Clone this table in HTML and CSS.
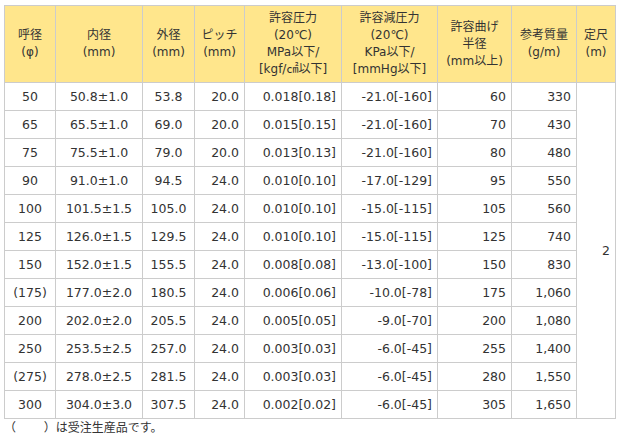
FILE: index.html
```html
<!DOCTYPE html>
<html lang="ja">
<head>
<meta charset="utf-8">
<link rel="stylesheet" href="styles.css">
</head>
<body>
<div class="wrap">
<table class="spec">
  <colgroup>
    <col class="c1"><col class="c2"><col class="c3"><col class="c4"><col class="c5"><col class="c6"><col class="c7"><col class="c8"><col class="c9">
  </colgroup>
  <thead>
    <tr>
      <th>呼径<br>(φ)</th>
      <th>内径<br>(mm)</th>
      <th>外径<br>(mm)</th>
      <th>ピッチ<br>(mm)</th>
      <th>許容圧力<br>(20℃)<br>MPa以下/<br>[kgf/㎠以下]</th>
      <th>許容減圧力<br>(20℃)<br>KPa以下/<br>[mmHg以下]</th>
      <th>許容曲げ<br>半径<br>(mm以上)</th>
      <th>参考質量<br>(g/m)</th>
      <th>定尺<br>(m)</th>
    </tr>
  </thead>
  <tbody>
    <tr><td class="ctr">50</td><td class="ctr">50.8±1.0</td><td class="ctr">53.8</td><td>20.0</td><td>0.018[0.18]</td><td>-21.0[-160]</td><td>60</td><td>330</td><td class="len" rowspan="12">2</td></tr>
    <tr><td class="ctr">65</td><td class="ctr">65.5±1.0</td><td class="ctr">69.0</td><td>20.0</td><td>0.015[0.15]</td><td>-21.0[-160]</td><td>70</td><td>430</td></tr>
    <tr><td class="ctr">75</td><td class="ctr">75.5±1.0</td><td class="ctr">79.0</td><td>20.0</td><td>0.013[0.13]</td><td>-21.0[-160]</td><td>80</td><td>480</td></tr>
    <tr><td class="ctr">90</td><td class="ctr">91.0±1.0</td><td class="ctr">94.5</td><td>24.0</td><td>0.010[0.10]</td><td>-17.0[-129]</td><td>95</td><td>550</td></tr>
    <tr><td class="ctr">100</td><td class="ctr">101.5±1.5</td><td class="ctr">105.0</td><td>24.0</td><td>0.010[0.10]</td><td>-15.0[-115]</td><td>105</td><td>560</td></tr>
    <tr><td class="ctr">125</td><td class="ctr">126.0±1.5</td><td class="ctr">129.5</td><td>24.0</td><td>0.010[0.10]</td><td>-15.0[-115]</td><td>125</td><td>740</td></tr>
    <tr><td class="ctr">150</td><td class="ctr">152.0±1.5</td><td class="ctr">155.5</td><td>24.0</td><td>0.008[0.08]</td><td>-13.0[-100]</td><td>150</td><td>830</td></tr>
    <tr><td class="ctr">(175)</td><td class="ctr">177.0±2.0</td><td class="ctr">180.5</td><td>24.0</td><td>0.006[0.06]</td><td>-10.0[-78]</td><td>175</td><td>1,060</td></tr>
    <tr><td class="ctr">200</td><td class="ctr">202.0±2.0</td><td class="ctr">205.5</td><td>24.0</td><td>0.005[0.05]</td><td>-9.0[-70]</td><td>200</td><td>1,080</td></tr>
    <tr><td class="ctr">250</td><td class="ctr">253.5±2.5</td><td class="ctr">257.0</td><td>24.0</td><td>0.003[0.03]</td><td>-6.0[-45]</td><td>255</td><td>1,400</td></tr>
    <tr><td class="ctr">(275)</td><td class="ctr">278.0±2.5</td><td class="ctr">281.5</td><td>24.0</td><td>0.003[0.03]</td><td>-6.0[-45]</td><td>280</td><td>1,550</td></tr>
    <tr><td class="ctr">300</td><td class="ctr">304.0±3.0</td><td class="ctr">307.5</td><td>24.0</td><td>0.002[0.02]</td><td>-6.0[-45]</td><td>305</td><td>1,650</td></tr>
  </tbody>
</table>
<p class="note">（　　 ）は受注生産品です。</p>
</div>
</body>
</html>
```
FILE: styles.css
```css
html, body {
  margin: 0;
  padding: 0;
  background: #ffffff;
}
body {
  font-family: "DejaVu Sans", "Noto Sans CJK JP", sans-serif;
  color: #333333;
}
.wrap {
  padding: 5px 0 0 4px;
}
.spec {
  border-collapse: collapse;
  table-layout: fixed;
  width: 612px;
  border: 1px solid #cccccc;
}
.c1 { width: 51px; }
.c2 { width: 87px; }
.c3 { width: 52px; }
.c4 { width: 50px; }
.c5 { width: 97px; }
.c6 { width: 96px; }
.c7 { width: 74px; }
.c8 { width: 65px; }
.c9 { width: 39px; }
.spec th,
.spec td {
  border: 1px solid #cccccc;
  line-height: 17px;
  white-space: nowrap;
}
.spec th {
  background: #ffe68c;
  font-weight: normal;
  font-size: 12px;
  text-align: center;
  vertical-align: middle;
  padding: 4px 0;
}
.spec td {
  font-size: 12.5px;
  text-align: right;
  padding: 5px 5px;
  height: 17px;
}
.spec td.ctr {
  text-align: center;
  padding: 5px 0;
}
.spec td.len {
  text-align: right;
  vertical-align: middle;
}
.note {
  margin: 0;
  font-size: 12px;
  line-height: 17px;
  padding-top: 1px;
}
```
